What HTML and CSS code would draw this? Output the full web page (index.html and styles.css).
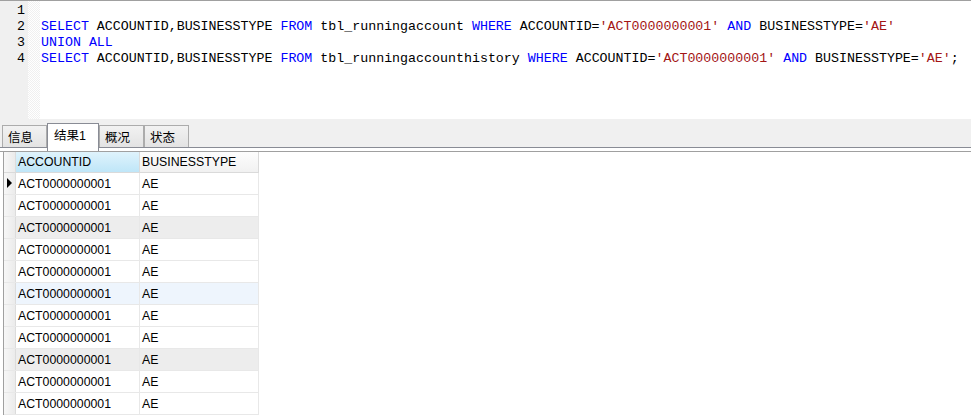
FILE: index.html
```html
<!DOCTYPE html>
<html lang="zh-CN">
<head>
    <meta charset="UTF-8">
    <title>查询</title>
    <link rel="stylesheet" href="styles.css">
</head>
<body>
    <div class="window">
        <!-- SQL editor -->
        <div class="editor">
            <div class="gutter">
                <div class="ln">1</div>
                <div class="ln">2</div>
                <div class="ln">3</div>
                <div class="ln">4</div>
            </div>
            <div class="fold"></div>
            <div class="code">
                <div class="line">&nbsp;</div>
                <div class="line"><span class="kw">SELECT</span> ACCOUNTID,BUSINESSTYPE <span class="kw">FROM</span> tbl_runningaccount <span class="kw">WHERE</span> ACCOUNTID=<span class="str">'ACT0000000001'</span> <span class="kw">AND</span> BUSINESSTYPE=<span class="str">'AE'</span></div>
                <div class="line"><span class="kw">UNION ALL</span></div>
                <div class="line"><span class="kw">SELECT</span> ACCOUNTID,BUSINESSTYPE <span class="kw">FROM</span> tbl_runningaccounthistory <span class="kw">WHERE</span> ACCOUNTID=<span class="str">'ACT0000000001'</span> <span class="kw">AND</span> BUSINESSTYPE=<span class="str">'AE'</span>;</div>
            </div>
        </div>

        <!-- Result tabs -->
        <div class="tabbar">
            <div class="tab">信息</div>
            <div class="tab active">结果1</div>
            <div class="tab">概况</div>
            <div class="tab">状态</div>
        </div>
        <div class="tab-gap"></div>

        <!-- Result grid -->
        <div class="result">
            <div class="grid">
                <div class="row head">
                    <div class="ind"></div>
                    <div class="cell sel">ACCOUNTID</div>
                    <div class="cell">BUSINESSTYPE</div>
                </div>
                <div class="row">
                    <div class="ind"><span class="cursor"></span></div>
                    <div class="cell">ACT0000000001</div>
                    <div class="cell">AE</div>
                </div>
                <div class="row">
                    <div class="ind"></div>
                    <div class="cell">ACT0000000001</div>
                    <div class="cell">AE</div>
                </div>
                <div class="row grey">
                    <div class="ind"></div>
                    <div class="cell">ACT0000000001</div>
                    <div class="cell">AE</div>
                </div>
                <div class="row">
                    <div class="ind"></div>
                    <div class="cell">ACT0000000001</div>
                    <div class="cell">AE</div>
                </div>
                <div class="row">
                    <div class="ind"></div>
                    <div class="cell">ACT0000000001</div>
                    <div class="cell">AE</div>
                </div>
                <div class="row hover">
                    <div class="ind"></div>
                    <div class="cell">ACT0000000001</div>
                    <div class="cell">AE</div>
                </div>
                <div class="row">
                    <div class="ind"></div>
                    <div class="cell">ACT0000000001</div>
                    <div class="cell">AE</div>
                </div>
                <div class="row">
                    <div class="ind"></div>
                    <div class="cell">ACT0000000001</div>
                    <div class="cell">AE</div>
                </div>
                <div class="row grey">
                    <div class="ind"></div>
                    <div class="cell">ACT0000000001</div>
                    <div class="cell">AE</div>
                </div>
                <div class="row">
                    <div class="ind"></div>
                    <div class="cell">ACT0000000001</div>
                    <div class="cell">AE</div>
                </div>
                <div class="row">
                    <div class="ind"></div>
                    <div class="cell">ACT0000000001</div>
                    <div class="cell">AE</div>
                </div>
            </div>
        </div>
    </div>
</body>
</html>
```

FILE: styles.css
```css
body {
    margin: 0;
    background-color: #ffffff;
    font-family: "Liberation Sans", "Noto Sans CJK SC", sans-serif;
    color: #000000;
}

.window {
    width: 971px;
    height: 415px;
    overflow: hidden;
}

/* editor */

.editor {
    display: flex;
    height: 118px;
    border-top: 1px solid #a0a0a0;
    font-family: "Liberation Mono", "Courier New", monospace;
    font-size: 13.3px;
    line-height: 16px;
    overflow: hidden;
}

.gutter {
    width: 28px;
    padding-top: 2px;
    padding-right: 3px;
    background-color: #f0f0f0;
    text-align: right;
    box-sizing: border-box;
}

.fold {
    width: 12px;
    background-color: #ffffff;
    background-image:
        linear-gradient(45deg, #f0f0f0 25%, transparent 25%, transparent 75%, #f0f0f0 75%),
        linear-gradient(45deg, #f0f0f0 25%, transparent 25%, transparent 75%, #f0f0f0 75%);
    background-size: 2px 2px;
    background-position: 0 0, 1px 1px;
}

.code {
    flex: 1;
    padding-top: 2px;
    padding-left: 1px;
}

.line {
    white-space: pre;
}

.kw {
    color: #0000ff;
}

.str {
    color: #a31515;
}

/* tabs */

.tabbar {
    display: flex;
    align-items: flex-end;
    height: 29px;
    padding-left: 2px;
    background-color: #f0f0f0;
    border-bottom: 1px solid #898c95;
    box-sizing: border-box;
}

.tab {
    width: 33px;
    height: 19px;
    padding: 2px 5px 0;
    border: 1px solid #acacac;
    border-bottom: none;
    background: linear-gradient(#f2f2f2, #e3e3e3);
    font-size: 12.5px;
    line-height: 20px;
}

.tab.active {
    width: 40px;
    height: 26px;
    margin-bottom: -4px;
    padding: 1px 4px 0 6px;
    line-height: 23px;
    background: #ffffff;
    border-color: #898c95;
    position: relative;
    z-index: 1;
}

.tab-gap {
    height: 3px;
    background-color: #ffffff;
    border-bottom: 1px solid #a0a0a0;
}

/* grid */

.grid {
    margin-left: 3px;
    width: 255px;
    border-left: 1px solid #a0a0a0;
    font-size: 12.3px;
}

.row {
    display: flex;
    height: 22px;
    line-height: 22px;
    border-bottom: 1px solid #e8e8e8;
    box-sizing: border-box;
}

.row.head {
    height: 21px;
    line-height: 21px;
    background: linear-gradient(#fdfdfd, #f1f1f1);
    border-bottom-color: #dadada;
}

.ind {
    width: 11px;
    flex: none;
    background: linear-gradient(90deg, #f7f7f7, #ebebeb);
    border-right: 1px solid #dcdcdc;
    position: relative;
}

.cursor {
    position: absolute;
    left: 3px;
    top: 5px;
    width: 0;
    height: 0;
    border-top: 5px solid transparent;
    border-bottom: 5px solid transparent;
    border-left: 5px solid #000000;
}

.cell {
    padding-left: 2px;
    border-right: 1px solid #e8e8e8;
    box-sizing: border-box;
}

.cell:nth-child(2) {
    width: 124px;
}

.cell:nth-child(3) {
    width: 119px;
}

.head .cell {
    border-right-color: #dadada;
}

.head .sel {
    background: linear-gradient(#dff3fc, #bfe6f8);
}

.row.grey .cell {
    background-color: #ededed;
}

.row.hover .cell {
    background-color: #eef5fd;
}
```
